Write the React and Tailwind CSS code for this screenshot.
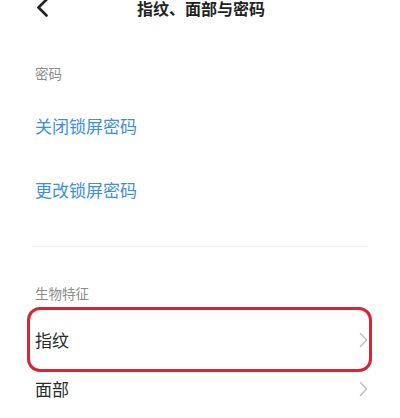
import React from 'react';

const font = { fontFamily: '"Noto Sans CJK SC", "Noto Sans", sans-serif' };

function Chevron() {
  return (
    <svg width="9" height="16" viewBox="0 0 9 16" fill="none">
      <path d="M1.5 1.5 L7.5 8 L1.5 14.5" stroke="#c2c2c2" strokeWidth="1.6" strokeLinecap="round" strokeLinejoin="round" />
    </svg>
  );
}

export default function App() {
  return (
    <div className="w-[400px] h-[418px] bg-white overflow-hidden" style={font}>
      {/* HEADER */}
      <div className="relative h-[16px] flex items-center justify-center">
        <svg className="absolute left-[35px] top-[-2px]" width="14" height="19" viewBox="0 0 14 19" fill="none">
          <path d="M11.5 1.5 L3.5 9.5 L11.5 17.5" stroke="#222" strokeWidth="2.6" strokeLinecap="round" strokeLinejoin="round" />
        </svg>
        <h1 className="text-[16px] leading-[16px] font-bold text-[#222] ml-[2px]">指纹、面部与密码</h1>
      </div>

      {/* PASSWORD */}
      <div className="mt-[47px] px-[35px] text-[13.5px] leading-[20px] text-[#8c8c8c]">密码</div>
      <div className="mt-[11px] h-[64px] px-[35px] flex items-center text-[17px] text-[#3d8fd9]">关闭锁屏密码</div>
      <div className="h-[64px] px-[35px] flex items-center text-[17px] text-[#3d8fd9]">更改锁屏密码</div>

      <div className="mt-[24px] mx-[32px] h-px bg-[#f0f0f0]" />

      {/* BIOMETRICS */}
      <div className="mt-[36px] px-[35px] text-[13.5px] leading-[20px] text-[#8c8c8c]">生物特征</div>
      <div className="mt-[4px] ml-[27px] w-[345px] h-[65px] border-[3px] border-[#d8252f] rounded-[13px] flex items-center justify-between pl-[5px] pr-[1px]">
        <span className="text-[17px] text-[#2b2b2b]">指纹</span>
        <Chevron />
      </div>
      <div className="h-[33px] pl-[35px] pr-[32px] flex items-center justify-between">
        <span className="text-[17px] text-[#2b2b2b]">面部</span>
        <Chevron />
      </div>
    </div>
  );
}
